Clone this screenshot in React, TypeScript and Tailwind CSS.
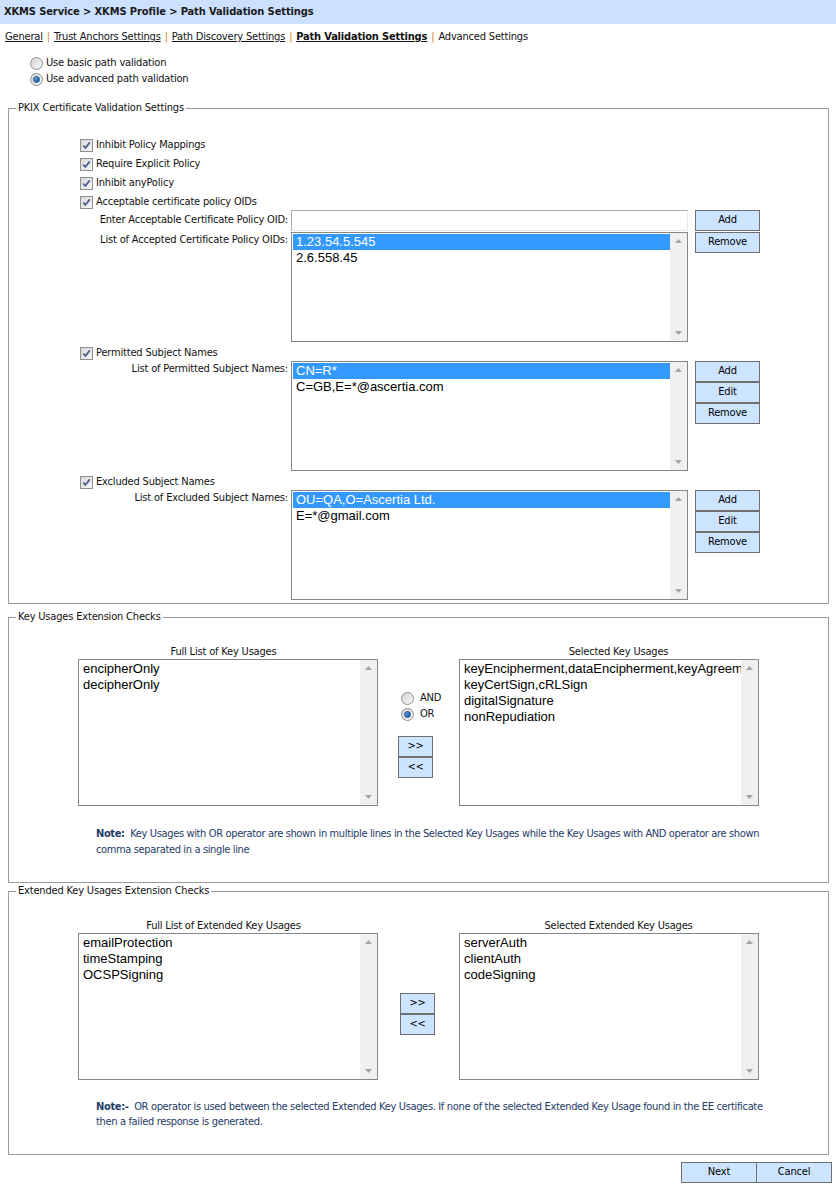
import React from "react";

const UI = "font-[family-name:'DejaVu_Sans_Condensed','Liberation_Sans',sans-serif] text-[11px] tracking-[-0.18px]";
const LIST = "font-[family-name:'Liberation_Sans',Arial,sans-serif] text-[13px] leading-[16px] tracking-normal";

function CheckBox() {
  return (
    <span className="flex w-[13px] h-[13px] border border-[#8e8f8f] bg-gradient-to-br from-[#d8d8d8] to-[#f7f7f7] items-center justify-center shrink-0">
      <svg width="11" height="11" viewBox="0 0 11 11">
        <path d="M2.2 5.6 L4.4 7.9 L8.8 2.4" stroke="#4b6190" strokeWidth="1.7" fill="none" />
      </svg>
    </span>
  );
}

function Radio({ checked }: { checked?: boolean }) {
  return (
    <span className="flex w-[13px] h-[13px] rounded-full border border-[#8e8f8f] bg-gradient-to-br from-[#d4d4d4] to-[#f8f8f8] items-center justify-center shrink-0">
      {checked && <span className="w-[7px] h-[7px] rounded-full bg-gradient-to-br from-[#6bb0ec] to-[#16509a] border border-[#1a4f8a]" />}
    </span>
  );
}

function Scrollbar() {
  return (
    <div className="w-[17px] bg-[#f0f0f0] flex flex-col justify-between items-center py-[6px] shrink-0">
      <svg width="7" height="4" viewBox="0 0 7 4"><path d="M0 4 L3.5 0 L7 4 Z" fill="#a3a3a3" /></svg>
      <svg width="7" height="4" viewBox="0 0 7 4"><path d="M0 0 L3.5 4 L7 0 Z" fill="#a3a3a3" /></svg>
    </div>
  );
}

function ListBox({ items, selected, className }: { items: string[]; selected?: number; className: string }) {
  return (
    <div className={`flex border border-[#828790] bg-white ${className}`}>
      <div className={`flex-1 pt-[1px] pl-[1px] overflow-hidden ${LIST}`}>
        {items.map((t, i) => (
          <div key={i} className={`h-[16px] pl-[3px] whitespace-nowrap ${i === selected ? "bg-[#3399ff] text-white" : "text-black"}`}>{t}</div>
        ))}
      </div>
      <Scrollbar />
    </div>
  );
}

function Btn({ children, className }: { children: React.ReactNode; className: string }) {
  return (
    <div className={`h-[21px] border border-[#707070] bg-[#cce4ff] flex items-center justify-center text-black ${className}`}>{children}</div>
  );
}

function CheckRow({ label }: { label: string }) {
  return (
    <div className="h-[19px] pt-[4px] flex items-center pl-[71px] gap-[3px]">
      <CheckBox />
      <span>{label}</span>
    </div>
  );
}

function Sep() {
  return <span className="text-[#d08a2a] mx-[4px]">|</span>;
}

function LabeledList({ label, items, selected, buttons }: { label: string; items: string[]; selected: number; buttons: string[] }) {
  return (
    <div className="flex">
      <div className="w-[279px] text-right pt-[1px] leading-[14px]">{label}</div>
      <ListBox items={items} selected={selected} className="ml-[3px] w-[397px] h-[110px]" />
      <div className="ml-[7px] flex flex-col">
        {buttons.map((b) => (
          <Btn key={b} className="w-[65px]">{b}</Btn>
        ))}
      </div>
    </div>
  );
}

export default function App() {
  return (
    <div className={`w-[836px] h-[1190px] bg-white text-[#111] ${UI}`}>
      <div className="h-[24px] bg-[#cce0ff] flex items-center pl-[4px] font-bold text-[#1a1a1a] tracking-[-0.1px]">
        XKMS Service &gt; XKMS Profile &gt; Path Validation Settings
      </div>
      <div className="mt-[6px] h-[14px] leading-[14px] pl-[5px] flex items-center whitespace-nowrap">
        <span className="underline">General</span>
        <Sep />
        <span className="underline">Trust Anchors Settings</span>
        <Sep />
        <span className="underline">Path Discovery Settings</span>
        <Sep />
        <span className="underline font-bold">Path Validation Settings</span>
        <Sep />
        <span>Advanced Settings</span>
      </div>
      <div className="mt-[11px] pl-[30px]">
        <div className="h-[16px] flex items-center gap-[3px]"><Radio /><span>Use basic path validation</span></div>
        <div className="h-[16px] flex items-center gap-[3px]"><Radio checked /><span>Use advanced path validation</span></div>
      </div>

      <fieldset className="mt-[14px] ml-[8px] w-[821px] border border-[#9c9c9c] pb-[3px]">
        <legend className="ml-[7px] px-[2px] leading-[14px]">PKIX Certificate Validation Settings</legend>
        <div className="h-[19px]" />
        <CheckRow label="Inhibit Policy Mappings" />
        <CheckRow label="Require Explicit Policy" />
        <CheckRow label="Inhibit anyPolicy" />
        <CheckRow label="Acceptable certificate policy OIDs" />
        <div className="flex items-center h-[21px]">
          <div className="w-[279px] text-right">Enter Acceptable Certificate Policy OID:</div>
          <div className="ml-[3px] w-[397px] h-[21px] border border-[#abadb3] border-r-[#e3e9ef] border-b-[#e3e9ef] bg-white" />
          <Btn className="ml-[7px] w-[65px]">Add</Btn>
        </div>
        <div className="flex mt-[1px]">
          <div className="w-[279px] text-right pt-[1px] leading-[14px]">List of Accepted Certificate Policy OIDs:</div>
          <ListBox items={["1.23.54.5.545", "2.6.558.45"]} selected={0} className="ml-[3px] w-[397px] h-[110px]" />
          <div className="ml-[7px]"><Btn className="w-[65px]">Remove</Btn></div>
        </div>
        <CheckRow label="Permitted Subject Names" />
        <LabeledList label="List of Permitted Subject Names:" items={["CN=R*", "C=GB,E=*@ascertia.com"]} selected={0} buttons={["Add", "Edit", "Remove"]} />
        <CheckRow label="Excluded Subject Names" />
        <LabeledList label="List of Excluded Subject Names:" items={["OU=QA,O=Ascertia Ltd.", "E=*@gmail.com"]} selected={0} buttons={["Add", "Edit", "Remove"]} />
      </fieldset>

      <fieldset className="mt-[6px] ml-[8px] w-[821px] border border-[#9c9c9c] pb-[24px]">
        <legend className="ml-[7px] px-[2px] leading-[14px]">Key Usages Extension Checks</legend>
        <div className="h-[21px]" />
        <div className="flex pl-[69px]">
          <div className="w-[300px] flex flex-col">
            <div className="h-[14px] leading-[14px] text-center pr-[9px]">Full List of Key Usages</div>
            <ListBox items={["encipherOnly", "decipherOnly"]} className="w-[300px] h-[147px]" />
          </div>
          <div className="w-[81px] flex flex-col pt-[45px]">
            <div className="pl-[23px]">
              <div className="h-[16px] flex items-center gap-[6px]"><Radio /><span>AND</span></div>
              <div className="h-[16px] flex items-center gap-[6px]"><Radio checked /><span>OR</span></div>
            </div>
            <div className="pl-[20px] mt-[14px] flex flex-col">
              <Btn className="w-[35px]">&gt;&gt;</Btn>
              <Btn className="w-[35px]">&lt;&lt;</Btn>
            </div>
          </div>
          <div className="w-[300px] flex flex-col">
            <div className="h-[14px] leading-[14px] text-center pl-[19px]">Selected Key Usages</div>
            <ListBox items={["keyEncipherment,dataEncipherment,keyAgreement", "keyCertSign,cRLSign", "digitalSignature", "nonRepudiation"]} className="w-[300px] h-[147px]" />
          </div>
        </div>
        <div className="mt-[20px] pl-[87px] leading-[16px] text-[#1e3a66] tracking-[-0.36px] whitespace-nowrap">
          <span className="font-bold">Note:</span>&nbsp; Key Usages with OR operator are shown in multiple lines in the Selected Key Usages while the Key Usages with AND operator are shown
          <br />
          comma separated in a single line
        </div>
      </fieldset>

      <fieldset className="mt-[1px] ml-[8px] w-[821px] border border-[#9c9c9c] pb-[25px]">
        <legend className="ml-[7px] px-[2px] leading-[14px]">Extended Key Usages Extension Checks</legend>
        <div className="h-[21px]" />
        <div className="flex pl-[69px]">
          <div className="w-[300px] flex flex-col">
            <div className="h-[14px] leading-[14px] text-center pr-[9px]">Full List of Extended Key Usages</div>
            <ListBox items={["emailProtection", "timeStamping", "OCSPSigning"]} className="w-[300px] h-[147px]" />
          </div>
          <div className="w-[81px] flex flex-col pt-[74px] pl-[22px]">
            <Btn className="w-[35px]">&gt;&gt;</Btn>
            <Btn className="w-[35px]">&lt;&lt;</Btn>
          </div>
          <div className="w-[300px] flex flex-col">
            <div className="h-[14px] leading-[14px] text-center pl-[19px]">Selected Extended Key Usages</div>
            <ListBox items={["serverAuth", "clientAuth", "codeSigning"]} className="w-[300px] h-[147px]" />
          </div>
        </div>
        <div className="mt-[19px] pl-[87px] leading-[15px] text-[#1e3a66] tracking-[-0.34px] whitespace-nowrap">
          <span className="font-bold">Note:-</span>&nbsp; OR operator is used between the selected Extended Key Usages. If none of the selected Extended Key Usage found in the EE certificate
          <br />
          then a failed response is generated.
        </div>
      </fieldset>

      <div className="mt-[7px] flex justify-end pr-[4px]">
        <Btn className="w-[76px]">Next</Btn>
        <Btn className="w-[76px] -ml-[1px]">Cancel</Btn>
      </div>
    </div>
  );
}
